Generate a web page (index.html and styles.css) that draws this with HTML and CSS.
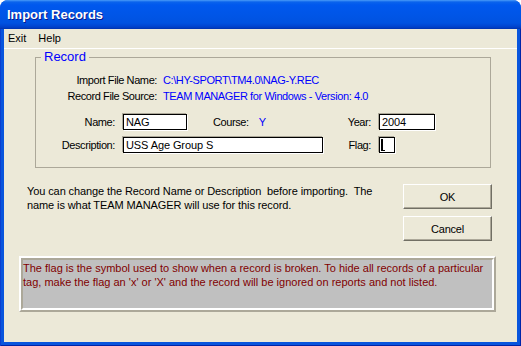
FILE: index.html
```html
<!doctype html>
<html lang="en">
 <head>
	<meta charset="UTF-8">
	<title>Import Records</title>
	<link rel="stylesheet" href="styles.css">
 </head>
	<body>
		<div class="window">
			<div class="titlebar"><span class="title">Import Records</span></div>
			<div class="frame">
				<div class="client">
					<div class="menubar">
						<span class="menu-item">Exit</span>
						<span class="menu-item">Help</span>
					</div>
					<fieldset class="record">
						<legend>Record</legend>
						<div class="info-row">
							<span class="info-label">Import File Name:</span>
							<span class="info-value">C:\HY-SPORT\TM4.0\NAG-Y.REC</span>
						</div>
						<div class="info-row">
							<span class="info-label">Record File Source:</span>
							<span class="info-value">TEAM MANAGER for Windows - Version: 4.0</span>
						</div>
						<div class="fields">
							<label class="field-label">Name:</label>
							<div class="field-cell">
								<input class="textbox name-box" type="text" value="NAG">
								<span class="course-label">Course:</span>
								<span class="info-value course-value">Y</span>
							</div>
							<label class="field-label">Year:</label>
							<input class="textbox year-box" type="text" value="2004">
							<label class="field-label">Description:</label>
							<div class="field-cell">
								<input class="textbox desc-box" type="text" value="USS Age Group S">
							</div>
							<label class="field-label">Flag:</label>
							<span class="textbox flag-box"><span class="caret"></span></span>
						</div>
					</fieldset>
					<div class="actions">
						<p class="hint">You can change the Record Name or Description&nbsp; before importing.&nbsp; The<br>name is what TEAM MANAGER will use for this record.</p>
						<div class="buttons">
							<button class="btn">OK</button>
							<button class="btn">Cancel</button>
						</div>
					</div>
					<div class="note">
						<p class="note-text">The flag is the symbol used to show when a record is broken. To hide all records of a particular<br>tag, make the flag an 'x' or 'X' and the record will be ignored on reports and not listed.</p>
					</div>
				</div>
			</div>
		</div>
	</body>
</html>
```
FILE: styles.css
```css
*{
	padding:0;
	margin:0;
	box-sizing:border-box;
}
html,body{
	background:#fff;
}
body{
	font-family:"Liberation Sans",Arial,sans-serif;
	font-size:11px;
	color:#000;
}
.window{
	width:521px;
	height:346px;
	display:flex;
	flex-direction:column;
	border-radius:8px 8px 0 0;
	overflow:hidden;
	background:#0855dd;
}
.titlebar{
	height:29px;
	flex:none;
	background:linear-gradient(to bottom,#4a9cf8 0,#0a63ec 2px,#0058ee 5px,#0055e6 16px,#0052e0 23px,#0046d2 26px,#003cc0 28px,#0030a8 29px);
	padding:1px 0 0 7px;
}
.title{
	color:#fff;
	font-weight:bold;
	font-size:13px;
	line-height:27px;
	text-shadow:1px 1px #0a1a8c;
}
.frame{
	flex:1;
	padding:0 4px 4px;
	background:#0855dd;
	box-shadow:inset 1px 0 #0a3fd0,inset -1px 0 #0024a8,inset 0 -1px #0024a8;
}
.client{
	height:100%;
	background:#ece9d8;
}
.menubar{
	height:20px;
	line-height:19px;
	padding-left:4px;
	border-bottom:1px solid #fff;
	display:flex;
}
.menu-item{
	margin-right:12px;
}
.record{
	margin-left:31px;
	width:456px;
	border:1px solid #aca899;
	padding:7px 0 14px 0;
}
.record legend{
	margin-left:5px;
	padding:0 3px;
	color:#0000ff;
	font-size:13px;
	line-height:16px;
}
.info-row{
	display:flex;
	line-height:16px;
	letter-spacing:-0.4px;
}
.info-label{
	width:121px;
	text-align:right;
}
.info-value{
	margin-left:6px;
	color:#0000ff;
}
.fields{
	margin-top:10px;
	display:grid;
	grid-template-columns:79px 200px 40px 56px;
	grid-auto-rows:16px;
	column-gap:8px;
	row-gap:7px;
	align-items:center;
	letter-spacing:-0.4px;
}
.field-label{
	text-align:right;
}
.field-cell{
	display:flex;
	align-items:center;
}
.textbox{
	display:block;
	height:16px;
	border:1px solid #000;
	box-shadow:-1px -1px 0 #aca899,1px 1px 0 #fff;
	background:#fff;
	font-family:"Liberation Sans",Arial,sans-serif;
	font-size:11px;
	letter-spacing:-0.1px;
	padding:0 2px;
	outline:none;
}
.name-box{
	width:64px;
}
.desc-box{
	width:200px;
}
.year-box{
	width:56px;
}
.flag-box{
	width:16px;
	justify-self:start;
	padding:1px 0 0 1px;
}
.caret{
	display:block;
	width:4px;
	height:12px;
	border-left:2px solid #000;
	border-bottom:1px solid #000;
}
.course-label{
	margin-left:26px;
}
.course-value{
	margin-left:10px;
}
.actions{
	display:flex;
	justify-content:space-between;
	margin:16px 25px 0 23px;
}
.hint{
	line-height:14px;
	letter-spacing:-0.1px;
}
.buttons{
	display:flex;
	flex-direction:column;
	gap:7px;
	width:89px;
}
.btn{
	height:25px;
	font-family:"Liberation Sans",Arial,sans-serif;
	font-size:11px;
	letter-spacing:-0.2px;
	background:#ece9d8;
	color:#000;
	border:1px solid;
	border-color:#fff #716f64 #716f64 #fff;
	box-shadow:inset -1px -1px 0 #aca899;
}
.note{
	margin:15px 0 0 15px;
	width:477px;
	height:56px;
	border:2px solid;
	border-color:#fff #aca899 #aca899 #fff;
}
.note-text{
	height:100%;
	border:2px solid;
	border-color:#aca899 #fff #fff #aca899;
	background:#c0c0c0;
	color:#800000;
	line-height:14px;
	padding:1px 0 0 0;
}
```
